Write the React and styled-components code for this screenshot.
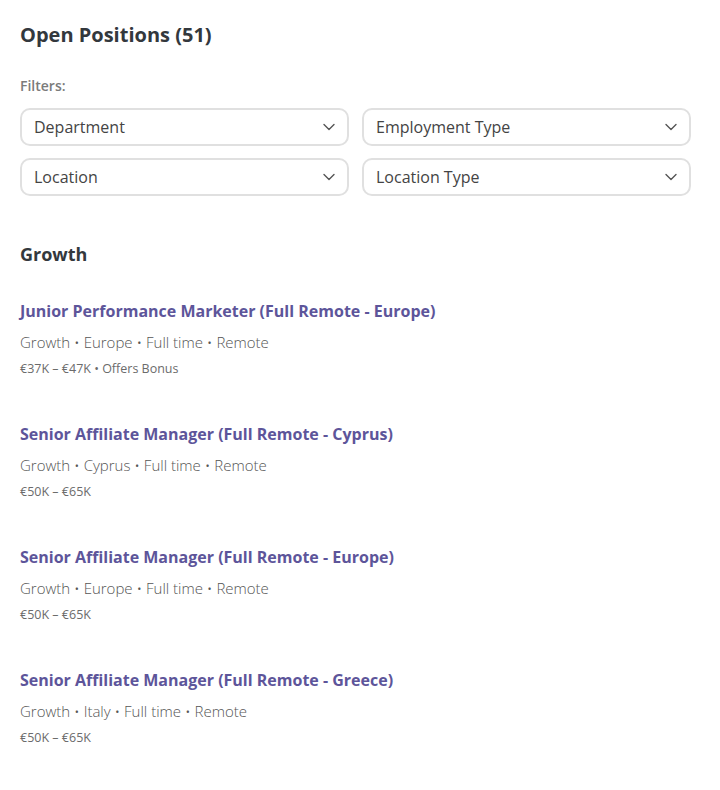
import React from "react";
import styled, { createGlobalStyle } from "styled-components";

const GlobalStyle = createGlobalStyle`
  body {
    margin: 0;
    background: #fff;
    font-family: "Open Sans", "Noto Sans", sans-serif;
  }
`;

const filters = ["Department", "Employment Type", "Location", "Location Type"];

const jobs = [
  {
    title: "Junior Performance Marketer (Full Remote - Europe)",
    meta: "Growth • Europe • Full time • Remote",
    salary: "€37K – €47K • Offers Bonus",
  },
  {
    title: "Senior Affiliate Manager (Full Remote - Cyprus)",
    meta: "Growth • Cyprus • Full time • Remote",
    salary: "€50K – €65K",
  },
  {
    title: "Senior Affiliate Manager (Full Remote - Europe)",
    meta: "Growth • Europe • Full time • Remote",
    salary: "€50K – €65K",
  },
  {
    title: "Senior Affiliate Manager (Full Remote - Greece)",
    meta: "Growth • Italy • Full time • Remote",
    salary: "€50K – €65K",
  },
];

const Chevron = () => (
  <svg width="12" height="8" viewBox="0 0 12 8" fill="none">
    <path d="M1 1.5 L6 6.5 L11 1.5" stroke="#555" strokeWidth="1.4" strokeLinecap="round" strokeLinejoin="round" />
  </svg>
);

const App = () => {
  return (
    <>
      <GlobalStyle />
      <Page>
        <Title>Open Positions (51)</Title>
        <FiltersLabel>Filters:</FiltersLabel>
        <FilterGrid>
          {filters.map((f) => (
            <Select key={f}>
              <span>{f}</span>
              <Chevron />
            </Select>
          ))}
        </FilterGrid>
        <Department>Growth</Department>
        <JobList>
          {jobs.map((job) => (
            <Job key={job.title}>
              <JobTitle href="#">{job.title}</JobTitle>
              <Meta>{job.meta}</Meta>
              <Salary>{job.salary}</Salary>
            </Job>
          ))}
        </JobList>
      </Page>
    </>
  );
};

const Page = styled.div`
  width: 671px;
  padding: 22px 0 40px 20px;
`;
const Title = styled.h1`
  margin: 0;
  font-size: 20px;
  font-weight: 700;
  color: #33383d;
  line-height: 26px;
`;
const FiltersLabel = styled.div`
  margin-top: 28px;
  font-size: 14px;
  font-weight: 600;
  color: #7b7b7b;
  line-height: 20px;
`;
const FilterGrid = styled.div`
  margin-top: 12px;
  display: grid;
  grid-template-columns: 1fr 1fr;
  column-gap: 13px;
  row-gap: 12px;
`;
const Select = styled.div`
  height: 38px;
  box-sizing: border-box;
  border: 2px solid #e0e0e0;
  border-radius: 10px;
  padding: 0 12px 0 12px;
  display: flex;
  align-items: center;
  justify-content: space-between;
  font-size: 16px;
  color: #444;
`;
const Department = styled.h2`
  margin: 46px 0 0;
  font-size: 18px;
  font-weight: 700;
  color: #33383d;
  line-height: 24px;
`;
const JobList = styled.div`
  margin-top: 34px;
  display: flex;
  flex-direction: column;
  gap: 46px;
`;
const Job = styled.div`
  display: flex;
  flex-direction: column;
`;
const JobTitle = styled.a`
  font-size: 16px;
  font-weight: 700;
  color: #5d559a;
  text-decoration: none;
  line-height: 22px;
`;
const Meta = styled.div`
  margin-top: 10px;
  font-size: 15px;
  font-weight: 300;
  color: #555;
  line-height: 20px;
`;
const Salary = styled.div`
  margin-top: 9px;
  font-size: 12.5px;
  color: #6b6b6b;
  line-height: 16px;
`;

export default App;
